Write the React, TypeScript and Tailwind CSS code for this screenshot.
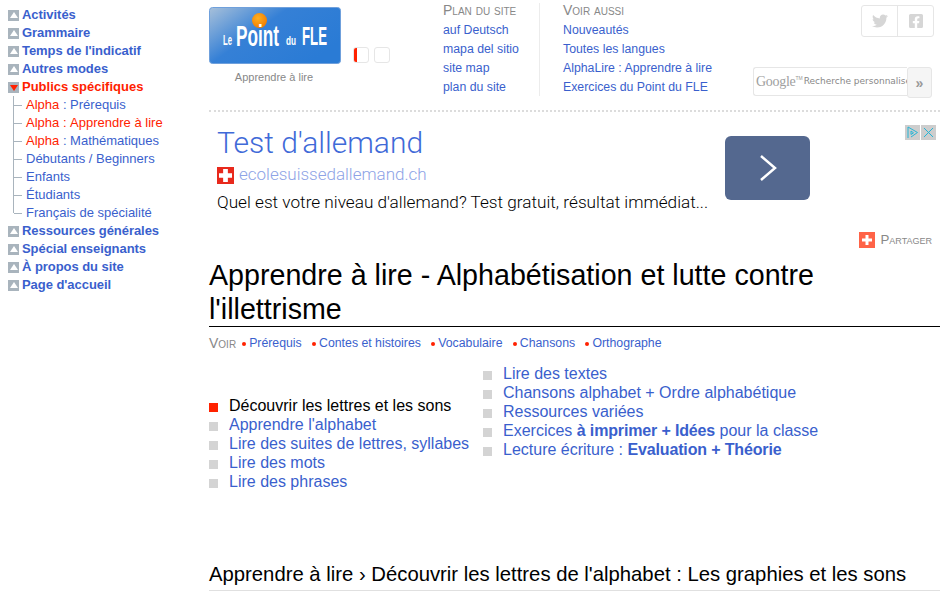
import type { ReactNode } from "react";
import { FaFacebookSquare, FaTwitter } from "react-icons/fa";

const fontSans = "font-['Liberation_Sans',Arial,sans-serif]";

type NavEntry = { label: string };

const navTop: NavEntry[] = [
  { label: "Activités" },
  { label: "Grammaire" },
  { label: "Temps de l'indicatif" },
  { label: "Autres modes" },
];

const navBottom: NavEntry[] = [
  { label: "Ressources générales" },
  { label: "Spécial enseignants" },
  { label: "À propos du site" },
  { label: "Page d'accueil" },
];

const subItems = [
  { prefix: "Alpha", rest: "Prérequis" },
  { prefix: "Alpha", rest: "Apprendre à lire", current: true },
  { prefix: "Alpha", rest: "Mathématiques" },
  { rest: "Débutants / Beginners" },
  { rest: "Enfants" },
  { rest: "Étudiants" },
  { rest: "Français de spécialité" },
];

const NavRow = ({ label }: NavEntry) => (
  <div className="flex h-[18px] items-center">
    <span className="mr-[3px] flex h-[11px] w-[11px] items-center justify-center bg-[#a9b4bd]">
      <span className="h-0 w-0 border-x-[4px] border-b-[6px] border-x-transparent border-b-white" />
    </span>
    <a className="text-[13px] font-bold tracking-[-0.05px] text-[#3a5fcd]">{label}</a>
  </div>
);

const Sidebar = () => (
  <nav className="w-[209px] shrink-0 pl-2 pt-[6px]">
    {navTop.map((n) => (
      <NavRow key={n.label} {...n} />
    ))}
    <div className="flex h-[18px] items-center">
      <span className="mr-[3px] flex h-[11px] w-[11px] items-center justify-center bg-[#a9b4bd]">
        <span className="mt-[1px] h-0 w-0 border-x-[4px] border-t-[6px] border-x-transparent border-t-[#ff2200]" />
      </span>
      <a className="text-[13px] font-bold text-[#ff2200]">Publics spécifiques</a>
    </div>
    <ul className="mb-[9px] ml-[5px] h-[117px] border-l border-[#a9b4bd]">
      {subItems.map((s) => (
        <li key={s.rest} className="flex h-[18px] items-center whitespace-nowrap text-[13px] text-[#3a5fcd]">
          <span className="mr-[4px] h-px w-[8px] bg-[#a9b4bd]" />
          {s.prefix && <span className="text-[#ff2200]">{s.prefix}&nbsp;</span>}
          {s.prefix && <span className={s.current ? "text-[#ff2200]" : ""}>:&nbsp;</span>}
          <span className={s.current ? "text-[#ff2200]" : ""}>{s.rest}</span>
        </li>
      ))}
    </ul>
    {navBottom.map((n) => (
      <NavRow key={n.label} {...n} />
    ))}
  </nav>
);

const Logo = () => (
  <svg width="132" height="57" viewBox="0 0 132 57" className="block">
    <defs>
      <linearGradient id="logoBg" x1="0" y1="0" x2="1" y2="0.6">
        <stop offset="0" stopColor="#a7c0da" />
        <stop offset="0.45" stopColor="#3580d6" />
        <stop offset="1" stopColor="#2a7bd5" />
      </linearGradient>
      <radialGradient id="logoSun" cx="0.4" cy="0.35" r="0.7">
        <stop offset="0" stopColor="#ffb020" />
        <stop offset="1" stopColor="#f07a00" />
      </radialGradient>
    </defs>
    <rect x="0.5" y="0.5" width="131" height="56" rx="3" fill="url(#logoBg)" stroke="#6fa0dc" />
    <circle cx="50.5" cy="13.5" r="7.500" fill="url(#logoSun)" />
    <g fill="#fff" fontWeight="700" fontFamily="'Liberation Sans', sans-serif">
      <text x="14" y="38" fontSize="14" textLength="9" lengthAdjust="spacingAndGlyphs">Le</text>
      <text x="27" y="39" fontSize="30" textLength="43" lengthAdjust="spacingAndGlyphs">Point</text>
      <text x="77" y="38" fontSize="13" textLength="10" lengthAdjust="spacingAndGlyphs">du</text>
      <text x="93" y="38" fontSize="25" textLength="25" lengthAdjust="spacingAndGlyphs">FLE</text>
    </g>
  </svg>
);

const SmallSquare = ({ mark }: { mark?: boolean }) => (
  <span className="relative block h-[16px] w-[16px] overflow-hidden rounded-[3px] border border-[#e6e6e6]">
    {mark && <span className="absolute -left-px -top-px h-[16px] w-[4px] bg-[#ff2200]" />}
  </span>
);

const HeaderLinks = ({ title, links, className }: { title: string; links: string[]; className: string }) => (
  <div className={className}>
    <div className="h-[21px] text-[14px] leading-[20px] text-[#888] [font-variant:small-caps]">{title}</div>
    {links.map((l) => (
      <a key={l} className="block h-[19px] whitespace-nowrap text-[12.3px] leading-[19px] text-[#3a5fcd]">
        {l}
      </a>
    ))}
  </div>
);

const Header = () => (
  <header className="flex h-[112px] shrink-0 border-b-2 border-dotted border-[#dcdcdc]">
    <div className="w-[144px] shrink-0 pt-[7px]">
      <Logo />
      <p className="mt-[7px] w-[130px] text-center text-[11px] leading-[13px] text-[#888]">Apprendre à lire</p>
    </div>
    <div className="flex w-[90px] shrink-0 gap-[5px] pt-[47px]">
      <SmallSquare mark />
      <SmallSquare />
    </div>
    <HeaderLinks
      title="Plan du site"
      links={["auf Deutsch", "mapa del sitio", "site map", "plan du site"]}
      className="w-[96px] shrink-0"
    />
    <span className="mt-[3px] h-[93px] w-px shrink-0 bg-[#ececec]" />
    <HeaderLinks
      title="Voir aussi"
      links={["Nouveautés", "Toutes les langues", "AlphaLire : Apprendre à lire", "Exercices du Point du FLE"]}
      className="w-[184px] shrink-0 pl-[23px]"
    />
    <div className="flex min-w-0 flex-1 flex-col items-end">
      <div className="mr-[6px] mt-[5px] flex h-[32px] w-[73px] shrink-0 overflow-hidden rounded-[3px] border border-[#e6e6e6]">
        <span className="flex w-[36px] items-center justify-center border-r border-[#e6e6e6] text-[16px] text-[#d6d6d6]">
          <FaTwitter />
        </span>
        <span className="flex flex-1 items-center justify-center text-[16px] text-[#d6d6d6]">
          <FaFacebookSquare />
        </span>
      </div>
      <div className="mr-[8px] mt-[30px] flex h-[31px] w-[179px] shrink-0">
        <div className="flex h-[29px] flex-1 items-center overflow-hidden whitespace-nowrap rounded-l-[3px] border border-r-0 border-[#e6e6e6] pl-[2px]">
          <span className="font-['Liberation_Serif',serif] text-[14px] tracking-[-0.3px] text-[#a0a0a0]">Google</span>
          <span className="mb-[6px] text-[5px] text-[#999]">TM</span>
          <span className="ml-[1px] font-['DejaVu_Sans',sans-serif] text-[9px] text-[#888]">Recherche personnalisée</span>
        </div>
        <span className="flex w-[25px] items-center justify-center rounded-[3px] border border-[#e6e6e6] bg-[#f5f5f5] text-[14px] font-bold leading-none text-[#999]">»</span>
      </div>
    </div>
  </header>
);

const Ad = () => (
  <section className="relative flex h-[117px] shrink-0 font-['Roboto',sans-serif]">
    <div className="w-[516px] shrink-0 pl-[8px] pt-[12px]">
      <h2 className="text-[30px] font-light leading-[38px] text-[#3f6ad8]">Test d'allemand</h2>
      <div className="mt-[2px] flex h-[22px] items-center">
        <span className="mr-[5px] flex h-[17px] w-[17px] shrink-0 items-center justify-center bg-[#e8291c]">
          <svg width="13" height="13" viewBox="0 0 11 11">
            <path d="M3.500 0h4v3.500H11v4H7.500V11h-4V7.500H0v-4h3.500z" fill="#fff" />
          </svg>
        </span>
        <span className="text-[17px] font-light text-[#8ea3e6]">ecolesuissedallemand.ch</span>
      </div>
      <p className="mt-[6px] whitespace-nowrap text-[17.2px] font-light leading-[20px] text-black">
        Quel est votre niveau d'allemand? Test gratuit, résultat immédiat...
      </p>
    </div>
    <div className="mt-[24px] flex h-[64px] w-[85px] items-center justify-center rounded-[6px] bg-[#54688f]">
      <svg width="18" height="28" viewBox="0 0 18 28" fill="none" stroke="#fff" strokeWidth="2.500">
        <path d="M2 2l14 12L2 26" />
      </svg>
    </div>
    <div className="absolute right-[4px] top-[13px] flex gap-px">
      <span className="flex h-[15px] w-[15px] items-center justify-center bg-[#cdcdcd]">
        <svg width="13" height="13" viewBox="0 0 13 13" fill="none" stroke="#25b5d6" strokeWidth="1">
          <path d="M2 1v11M2 1l9.500 5.500L5 11M5 5v3.500l2.500-1.700z" />
        </svg>
      </span>
      <span className="flex h-[15px] w-[15px] items-center justify-center bg-[#cdcdcd]">
        <svg width="11" height="11" viewBox="0 0 11 11" fill="none" stroke="#25b5d6" strokeWidth="1">
          <path d="M1 1l9 9M10 1l-9 9" />
        </svg>
      </span>
    </div>
  </section>
);

const listLeft = ["Apprendre l'alphabet", "Lire des suites de lettres, syllabes", "Lire des mots", "Lire des phrases"];

const ListRow = ({ children, on }: { children: ReactNode; on?: boolean }) => (
  <li className={`flex h-[19px] items-center whitespace-nowrap text-[16px] ${on ? "text-black" : "text-[#3a5fcd]"}`}>
    <span className={`mr-[11px] mt-[3px] h-[9px] w-[9px] shrink-0 ${on ? "bg-[#ff2200]" : "bg-[#d4d4d4]"}`} />
    <span>{children}</span>
  </li>
);

const voirLinks = ["Prérequis", "Contes et histoires", "Vocabulaire", "Chansons", "Orthographe"];

const Main = () => (
  <main className="w-[731px] shrink-0">
    <Header />
    <Ad />
    <div className="flex h-[22px] items-center justify-end pr-[8px] text-[13.3px] text-[#888] [font-variant:small-caps]">
      <span className="mr-[5px] flex h-[16px] w-[16px] items-center justify-center bg-[#ff6347]">
        <svg width="10" height="10" viewBox="0 0 10 10">
          <path d="M3.500 0h3v3.500H10v3H6.500V10h-3V6.500H0v-3h3.500z" fill="#fff" />
        </svg>
      </span>
      Partager
    </div>
    <h1 className="mt-[7px] border-b border-black text-[28.65px] leading-[34px] text-black">
      Apprendre à lire - Alphabétisation et lutte contre l'illettrisme
    </h1>
    <div className="mt-[8px] flex h-[16px] items-center whitespace-nowrap text-[12.3px] text-[#3a5fcd]">
      <span className="mr-[6px] text-[14px] text-[#888] [font-variant:small-caps]">Voir</span>
      {voirLinks.map((l) => (
        <span key={l} className="mr-[10.300px] flex items-center">
          <span className="mr-[3px] mt-[2px] h-[4px] w-[4px] rounded-full bg-[#ff2200]" />
          {l}
        </span>
      ))}
    </div>
    <div className="mt-[13px] flex">
      <ul className="mt-[32px] w-[274px] shrink-0">
        <ListRow on>Découvrir les lettres et les sons</ListRow>
        {listLeft.map((l) => (
          <ListRow key={l}>{l}</ListRow>
        ))}
      </ul>
      <ul>
        <ListRow>Lire des textes</ListRow>
        <ListRow>Chansons alphabet + Ordre alphabétique</ListRow>
        <ListRow>Ressources variées</ListRow>
        <ListRow>
          Exercices <b className="tracking-[-0.15px]">à imprimer + Idées</b> pour la classe
        </ListRow>
        <ListRow>
          Lecture écriture : <b className="tracking-[-0.15px]">Evaluation + Théorie</b>
        </ListRow>
      </ul>
    </div>
    <h3 className="mt-[70px] whitespace-nowrap border-b border-[#e0e0e0] pb-[3px] text-[20.3px] leading-[26px] text-black">
      Apprendre à lire › Découvrir les lettres de l'alphabet : Les graphies et les sons
    </h3>
  </main>
);

export default function App() {
  return (
    <div className={`flex h-[591px] w-[951px] overflow-hidden bg-white ${fontSans}`}>
      <Sidebar />
      <Main />
    </div>
  );
}
